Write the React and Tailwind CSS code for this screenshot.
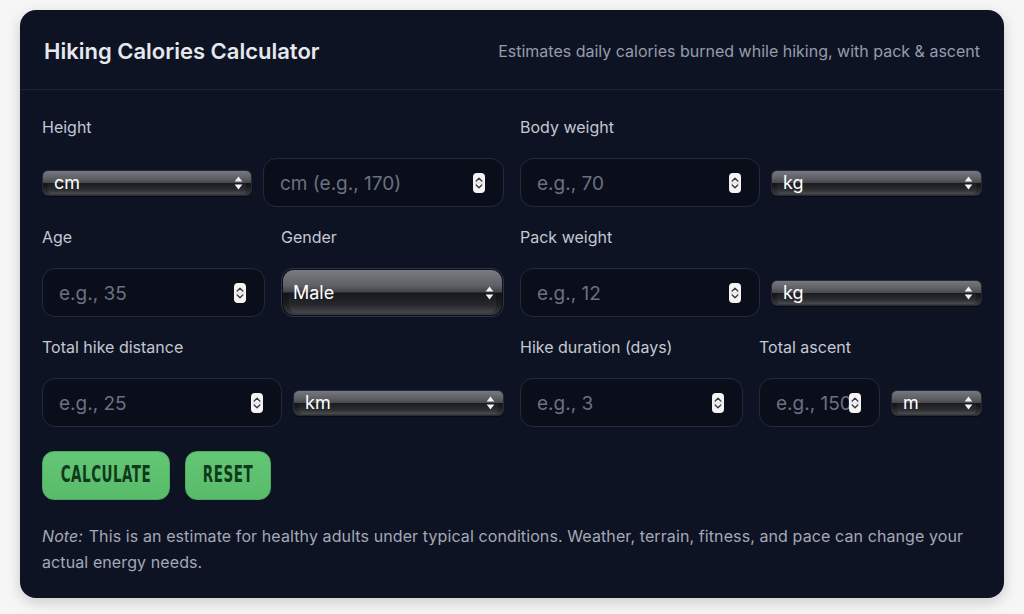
import React from "react";

const font = { fontFamily: "Inter, 'Noto Sans', sans-serif" };

function Spinner() {
  return (
    <svg width="12" height="20" viewBox="0 0 12 20" className="absolute right-[19px] top-1/2 -translate-y-1/2">
      <rect x="0" y="0" width="12" height="20" rx="4" fill="#f4f4f5" />
      <path d="M3.2 8 L6 5.2 L8.8 8" fill="none" stroke="#3a3a3f" strokeWidth="1.4" strokeLinecap="round" strokeLinejoin="round" />
      <path d="M3.2 12 L6 14.8 L8.8 12" fill="none" stroke="#3a3a3f" strokeWidth="1.4" strokeLinecap="round" strokeLinejoin="round" />
      <line x1="1" y1="10" x2="11" y2="10" stroke="#c9c9ce" strokeWidth="0.6" />
    </svg>
  );
}

function NumInput({ placeholder, className = "" }) {
  return (
    <div className={"relative h-[49px] " + className}>
      <input
        type="text"
        placeholder={placeholder}
        className="w-full h-full rounded-[13px] border border-[#232a3c] bg-[#0a0e1b] pl-4 pr-[24px] pt-[2px] text-[19px] text-[#e5e7eb] placeholder:text-[#6b7180] outline-none"
        style={font}
      />
      <Spinner />
    </div>
  );
}

function Arrows() {
  return (
    <svg width="9" height="16" viewBox="0 0 9 16" className="absolute right-[8px] top-1/2 -translate-y-1/2">
      <path d="M4.5 1.5 L8.3 6.5 L0.7 6.5 Z" fill="#f5f5f7" />
      <path d="M4.5 14.5 L8.3 9.5 L0.7 9.5 Z" fill="#f5f5f7" />
    </svg>
  );
}

function GlossySelect({ value, className = "" }) {
  return (
    <div className={"relative h-[26px] rounded-[6px] border border-[#262a33] bg-[linear-gradient(to_bottom,#76787f_0%,#5e6066_30%,#484a50_48%,#131418_52%,#1d1f23_70%,#3a3c41_100%)] shadow-[0_1px_1px_rgba(0,0,0,0.5)] " + className}>
      <div className="absolute left-[5px] right-[5px] bottom-[1px] h-[11px] rounded-b-[4px] bg-[linear-gradient(to_bottom,#1a1b1f_0%,#2a2c30_60%,#4a4c51_100%)]" />
      <span className="absolute left-[11px] top-1/2 -translate-y-1/2 text-[18px] leading-none text-white" style={font}>{value}</span>
      <Arrows />
    </div>
  );
}

function TallSelect({ value }) {
  return (
    <div className="relative h-[49px] rounded-[12px] border border-[#2f3545] bg-[#0a0e1b] p-[1px]">
      <div className="relative h-full w-full rounded-[11px] bg-[linear-gradient(to_bottom,#7a7c83_0%,#5e6066_35%,#44464b_48%,#121316_52%,#1c1d21_75%,#3c3e43_100%)]">
        <div className="absolute left-[6px] right-[6px] bottom-[2px] h-[20px] rounded-b-[8px] bg-[linear-gradient(to_bottom,#17181c_0%,#26282c_60%,#47494e_100%)]" />
        <span className="absolute left-[10px] top-1/2 -translate-y-1/2 text-[18px] leading-none text-white" style={font}>{value}</span>
        <Arrows />
      </div>
    </div>
  );
}

function Field({ label, children, span = 1 }) {
  return (
    <div className={"flex flex-col gap-[19px] " + (span === 2 ? "col-span-2" : "col-span-1")}>
      <label className="text-[16px] leading-6 text-[#c3c8d2]" style={font}>{label}</label>
      {children}
    </div>
  );
}

function Btn({ children, w }) {
  return (
    <button
      className={"h-[49px] rounded-[12px] border border-[#4aaa5d] bg-[linear-gradient(to_bottom,#63c776,#58bb6a)] flex items-center justify-center " + w}
    >
      <span
        className="inline-block scale-y-[1.5] text-[15px] font-bold tracking-[0.5px] text-[#0f3a1b]"
        style={{ fontFamily: "'DejaVu Sans Condensed', 'DejaVu Sans', sans-serif" }}
      >
        {children}
      </span>
    </button>
  );
}

export default function App() {
  return (
    <div className="min-h-screen bg-[#f6f6f7] pt-[10px] px-[20px]" style={font}>
      <div className="rounded-[16px] bg-[#0e1324] shadow-[0_4px_14px_rgba(0,0,0,0.18)] overflow-hidden">
        <div className="h-[80px] flex items-center justify-between pl-[24px] pr-[24px] pt-[3px] border-b border-[#1e2536]">
          <h1 className="text-[22px] font-semibold text-[#e6e8ee]">Hiking Calories Calculator</h1>
          <p className="text-[16px] text-[#959cab]">Estimates daily calories burned while hiking, with pack &amp; ascent</p>
        </div>
        <div className="px-[22px] pt-[25px] pb-[23px]">
          <div className="grid grid-cols-4 gap-x-4 gap-y-[18px]">
            <Field label="Height" span={2}>
              <div className="flex items-center gap-[11px]">
                <GlossySelect value="cm" className="w-[210px] shrink-0" />
                <NumInput placeholder="cm (e.g., 170)" className="flex-1" />
              </div>
            </Field>
            <Field label="Body weight" span={2}>
              <div className="flex items-center gap-[11px]">
                <NumInput placeholder="e.g., 70" className="w-[240px] shrink-0" />
                <GlossySelect value="kg" className="flex-1" />
              </div>
            </Field>

            <Field label="Age">
              <NumInput placeholder="e.g., 35" />
            </Field>
            <Field label="Gender">
              <TallSelect value="Male" />
            </Field>
            <Field label="Pack weight" span={2}>
              <div className="flex items-center gap-[11px]">
                <NumInput placeholder="e.g., 12" className="w-[240px] shrink-0" />
                <GlossySelect value="kg" className="flex-1" />
              </div>
            </Field>

            <Field label="Total hike distance" span={2}>
              <div className="flex items-center gap-[11px]">
                <NumInput placeholder="e.g., 25" className="w-[240px] shrink-0" />
                <GlossySelect value="km" className="flex-1" />
              </div>
            </Field>
            <Field label="Hike duration (days)">
              <NumInput placeholder="e.g., 3" />
            </Field>
            <Field label="Total ascent">
              <div className="flex items-center gap-[11px]">
                <NumInput placeholder="e.g., 1500" className="w-[121px] shrink-0" />
                <GlossySelect value="m" className="flex-1" />
              </div>
            </Field>
          </div>

          <div className="flex gap-[15px] mt-[24px]">
            <Btn w="w-[128px]">CALCULATE</Btn>
            <Btn w="w-[86px]">RESET</Btn>
          </div>

          <p className="mt-[23px] text-[16px] leading-[26px] tracking-[0.1px] text-[#a3a9b6]">
            <em className="pr-[1px]">Note:</em> This is an estimate for healthy adults under typical conditions. Weather, terrain, fitness, and pace can change your actual energy needs.
          </p>
        </div>
      </div>
    </div>
  );
}
